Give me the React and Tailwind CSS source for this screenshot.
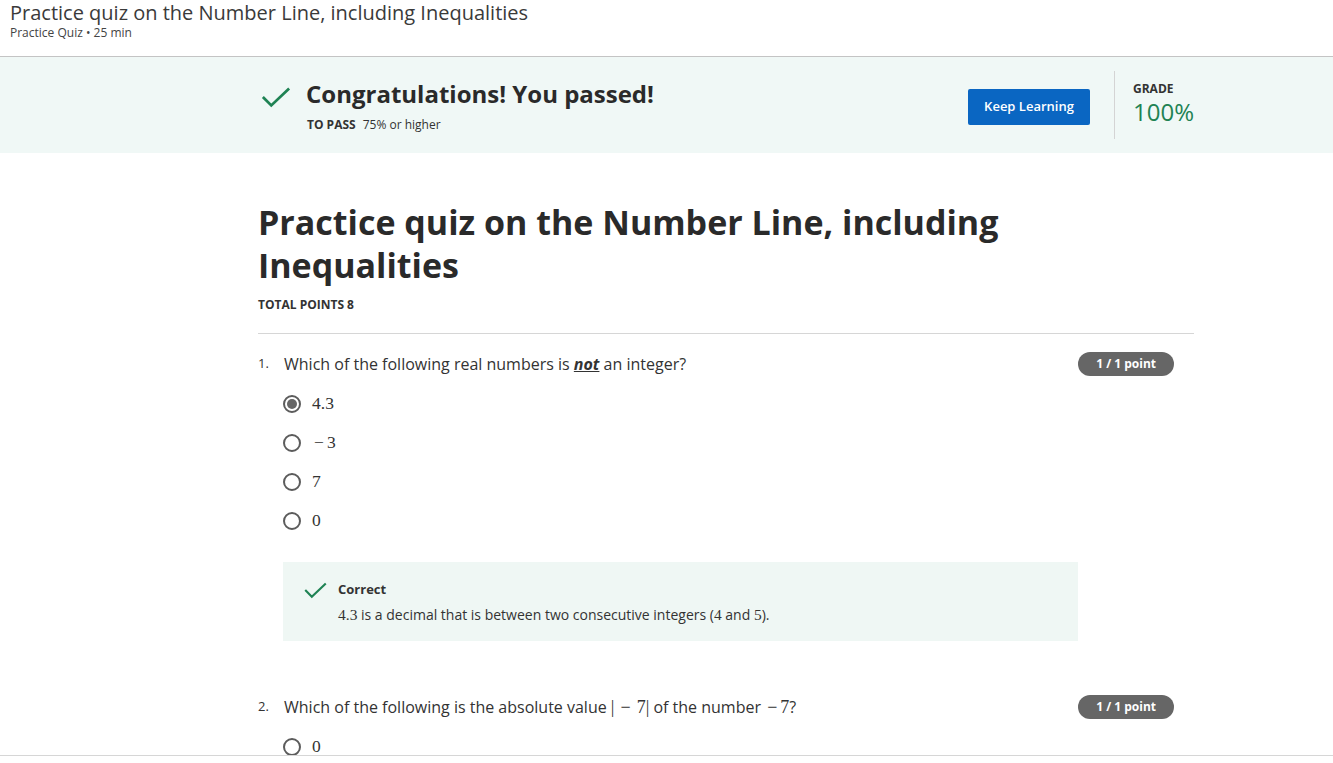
import React from 'react';

const SANS = { fontFamily: '"Open Sans", "Noto Sans", sans-serif' };
const MATH = 'font-["Liberation_Serif","DejaVu_Serif",serif]';

function Check({ className }) {
  return (
    <svg viewBox="0 0 28 20" className={className} fill="none">
      <path d="M1.5 9.5 L9.5 17.5 L26.5 1.5" stroke="#1f8354" strokeWidth="2.6" />
    </svg>
  );
}

function Radio({ checked }) {
  return (
    <span className="w-[18px] h-[18px] rounded-full border-2 border-[#5c5c5c] flex items-center justify-center shrink-0">
      {checked && <span className="w-[10px] h-[10px] rounded-full bg-[#666]" />}
    </span>
  );
}

function Option({ checked, children }) {
  return (
    <div className="h-[39px] flex items-center gap-[11px] pl-[25px]">
      <Radio checked={checked} />
      <span className={`${MATH} text-[17.5px] text-[#333]`}>{children}</span>
    </div>
  );
}

function Minus({ wide }) {
  return <span className={wide ? 'mx-[6px]' : 'ml-[2px] mr-[3px]'}>−</span>;
}

function PointBadge() {
  return (
    <span className="h-6 px-[18px] mr-5 rounded-full bg-[#666] text-white text-[12px] font-bold flex items-center shrink-0">
      1 / 1 point
    </span>
  );
}

function QuestionHead({ n, children }) {
  return (
    <div className="flex items-center justify-between h-6">
      <div className="flex items-center text-[16px] text-[#333]">
        <span className="w-[26px] text-[13px]">{n}.</span>
        <span>{children}</span>
      </div>
      <PointBadge />
    </div>
  );
}

export default function App() {
  return (
    <div className="h-[763px] overflow-hidden bg-white text-[#333]" style={SANS}>
      <header className="h-[57px] border-b border-[#c4c4c4] pl-[10px] pt-px">
        <div className="text-[20px] leading-6 text-[#3a3a3a]">Practice quiz on the Number Line, including Inequalities</div>
        <div className="text-[12px] leading-4 text-[#444]">Practice Quiz • 25 min</div>
      </header>

      <div className="h-[699px] overflow-hidden border-b border-[#d6d6d6]">
        <section className="h-[96px] bg-[#f0f8f6]">
          <div className="ml-[258px] w-[936px] h-full flex items-start">
            <Check className="w-[30px] h-[21px] mt-[30px] ml-[3px] shrink-0" />
            <div className="ml-[14px] pt-[21px]">
              <div className="ml-px text-[24px] leading-8 font-bold text-[#2a2a2a]">Congratulations! You passed!</div>
              <div className="mt-[7px] ml-[2px] text-[12px] leading-4 text-[#333]">
                <span className="font-bold">TO PASS</span>
                <span className="ml-[7px]">75% or higher</span>
              </div>
            </div>
            <div className="flex-1" />
            <button className="mt-[32px] h-9 w-[122px] rounded-[2px] bg-[#0a66c2] text-white text-[13px] font-semibold">
              Keep Learning
            </button>
            <div className="mt-[14px] ml-6 h-[68px] w-px bg-[#d4d4d4]" />
            <div className="ml-[18px] w-[61px] pt-[24px]">
              <div className="text-[12px] leading-4 font-bold text-[#333]">GRADE</div>
              <div className="text-[24px] leading-[30px] text-[#1f8354]">100%</div>
            </div>
          </div>
        </section>

        <main className="ml-[258px] w-[936px]">
          <h1 className="mt-[48px] text-[34px] leading-[43px] font-bold text-[#2a2a2a]">
            Practice quiz on the Number Line, including
            <br />
            Inequalities
          </h1>
          <div className="mt-[10px] text-[12px] leading-4 font-bold text-[#333]">TOTAL POINTS 8</div>
          <div className="mt-[20px] h-px bg-[#d6d6d6]" />

          <div className="mt-[18px]">
            <QuestionHead n={1}>
              Which of the following real numbers is{' '}
              <span className="font-bold italic underline">not</span> an integer?
            </QuestionHead>
            <div className="mt-[8px]">
              <Option checked>4.3</Option>
              <Option>
                <Minus />3
              </Option>
              <Option>7</Option>
              <Option>0</Option>
            </div>
            <div className="mt-[22px] ml-[25px] w-[795px] h-[79px] bg-[#eff7f4] flex items-start pl-[21px] pt-[17px]">
              <Check className="w-[23px] h-[17px] mt-[3px] shrink-0" />
              <div className="ml-[11px]">
                <div className="text-[13px] leading-5 font-bold text-[#333]">Correct</div>
                <div className="mt-[6px] text-[14px] leading-5 text-[#333]">
                  <span className={`${MATH} text-[15.5px]`}>4.3</span> is a decimal that is between two consecutive integers (
                  <span className={`${MATH} text-[15.5px]`}>4</span> and <span className={`${MATH} text-[15.5px]`}>5</span>).
                </div>
              </div>
            </div>
          </div>

          <div className="mt-[54px]">
            <QuestionHead n={2}>
              Which of the following is the absolute value{' '}
              <span className={`${MATH} text-[18px]`}>
                |<Minus wide />7|
              </span>{' '}
              of the number{' '}
              <span className={`${MATH} text-[18px]`}>
                <Minus />7
              </span>
              ?
            </QuestionHead>
            <div className="mt-[8px]">
              <Option>0</Option>
            </div>
          </div>
        </main>
      </div>
    </div>
  );
}
